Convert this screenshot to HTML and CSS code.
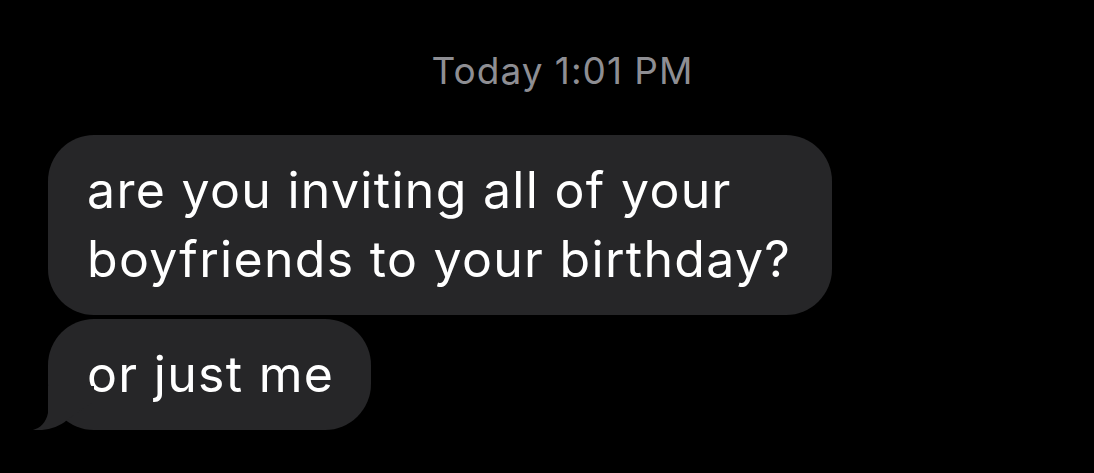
FILE: index.html
```html
<!DOCTYPE html>
<html lang="en">
<head>
<meta charset="utf-8">
<title>Messages</title>
<link rel="stylesheet" href="styles.css">
</head>
<body>
<main class="thread">
  <div class="stamp"><span class="day">Today</span> 1:01 PM</div>
  <div class="messages">
    <div class="bubble">are you inviting all of your boyfriends to your birthday?</div>
    <div class="bubble bubble--tail">or just me
      <svg class="tail" width="62" height="46" viewBox="0 0 62 46" aria-hidden="true">
        <path d="M16 2 L16 29 C14 39 8 44 1 46 C13 47 26 44 35 36 L62 17 L62 2 Z" fill="#262628"/>
      </svg>
    </div>
  </div>
</main>
</body>
</html>
```

FILE: styles.css
```css
html, body {
  margin: 0;
  padding: 0;
  background: #000;
}

body {
  width: 1094px;
  height: 473px;
  overflow: hidden;
  font-family: Inter, "Open Sans", "Liberation Sans", sans-serif;
}

.thread {
  display: flex;
  flex-direction: column;
}

.stamp {
  padding-top: 48px;
  padding-left: 31px;
  text-align: center;
  font-size: 37px;
  line-height: 46px;
  color: #8e8e93;
  letter-spacing: 1px;
}

.messages {
  display: flex;
  flex-direction: column;
  align-items: flex-start;
  gap: 4px;
  padding-left: 48px;
  padding-top: 41px;
}

.bubble {
  position: relative;
  box-sizing: border-box;
  max-width: 784px;
  padding: 21px 37px 21px 39px;
  border-radius: 46px;
  background: #262628;
  color: #fff;
  font-size: 50px;
  line-height: 69px;
  letter-spacing: 1.3px;
}

.tail {
  position: absolute;
  left: -16px;
  bottom: 0;
  display: block;
}
```
